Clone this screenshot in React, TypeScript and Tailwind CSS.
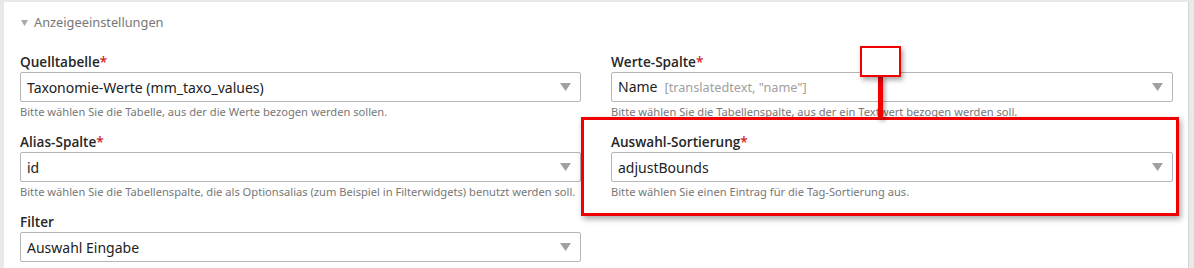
import React from "react";

const font = { fontFamily: '"Noto Sans", "Open Sans", sans-serif' };
const labelFont = { fontFamily: '"Open Sans", "Noto Sans", sans-serif' };

function Caret() {
  return (
    <svg width="11" height="8" viewBox="0 0 11 8" className="shrink-0">
      <path d="M0 0 L11 0 L5.5 8 Z" fill="#a0a0a0" />
    </svg>
  );
}

function Field({
  label,
  required,
  value,
  extra,
  help,
  className = "",
}: {
  label: string;
  required?: boolean;
  value: string;
  extra?: string;
  help: string;
  className?: string;
}) {
  return (
    <div className={"flex flex-col " + className}>
      <div
        className="h-[18px] text-[13.6px] leading-[18px] font-semibold text-[#262626]"
        style={labelFont}
      >
        {label}
        {required && <span className="text-[#d21f1f]">*</span>}
      </div>
      <div className="mt-[1px] h-[30px] border border-[#b5b5b5] rounded-[2px] bg-white flex items-center pl-[6px] pr-[9px]">
        <div className="flex-1 text-[14px] text-[#222] whitespace-nowrap overflow-hidden">
          {value}
          {extra && <span className="text-[#a0a0a0] text-[12.7px] ml-[7px]">{extra}</span>}
        </div>
        <Caret />
      </div>
      <div className="mt-[2px] h-[16px] text-[11.15px] leading-[16px] text-[#777] whitespace-nowrap">
        {help}
      </div>
    </div>
  );
}

export default function App() {
  return (
    <div
      className="relative w-[1194px] h-[268px] overflow-hidden bg-[#e9e9e9] pl-[4px] pr-[5px] pt-[2px]"
      style={font}
    >
      <div className="h-[300px] bg-white border-r border-[#d6d6d6] pl-[16px] pr-[15px] pt-[12px]">
        <div className="flex items-center h-[18px] text-[12.8px] text-[#777]">
          <svg width="7" height="6" viewBox="0 0 7 6" className="ml-[1px] mr-[6px]">
            <path d="M0 0 L7 0 L3.5 6 Z" fill="#a8a8a8" />
          </svg>
          Anzeigeeinstellungen
        </div>
        <div className="mt-[21px] grid grid-cols-[561px_562px] gap-x-[30px] gap-y-[13px]">
          <Field
            label="Quelltabelle"
            required
            value="Taxonomie-Werte (mm_taxo_values)"
            help="Bitte wählen Sie die Tabelle, aus der die Werte bezogen werden sollen."
          />
          <Field
            label="Werte-Spalte"
            required
            value="Name"
            extra={'[translatedtext, "name"]'}
            help="Bitte wählen Sie die Tabellenspalte, aus der ein Textwert bezogen werden soll."
          />
          <Field
            label="Alias-Spalte"
            required
            value="id"
            help="Bitte wählen Sie die Tabellenspalte, die als Optionsalias (zum Beispiel in Filterwidgets) benutzt werden soll."
          />
          <Field
            label="Auswahl-Sortierung"
            required
            value="adjustBounds"
            help="Bitte wählen Sie einen Eintrag für die Tag-Sortierung aus."
          />
          <Field
            label="Filter"
            value="Auswahl Eingabe"
            help="Hier können Sie den Filter wählen."
          />
        </div>
      </div>

      {/* annotation overlay */}
      <div className="absolute left-[581px] top-[117px] w-[598px] h-[99px] border-[3px] border-[#f00000] shadow-[2px_3px_6px_rgba(0,0,0,0.35)]" />
      <div className="absolute left-[878px] top-[76px] w-[5px] h-[43px] bg-[#f00000] rounded-[1px] shadow-[2px_2px_4px_rgba(0,0,0,0.35)]" />
      <div className="absolute left-[860px] top-[46px] w-[41px] h-[31px] bg-white border-[2px] border-[#f00000] shadow-[2px_3px_5px_rgba(0,0,0,0.35)]" />
    </div>
  );
}
